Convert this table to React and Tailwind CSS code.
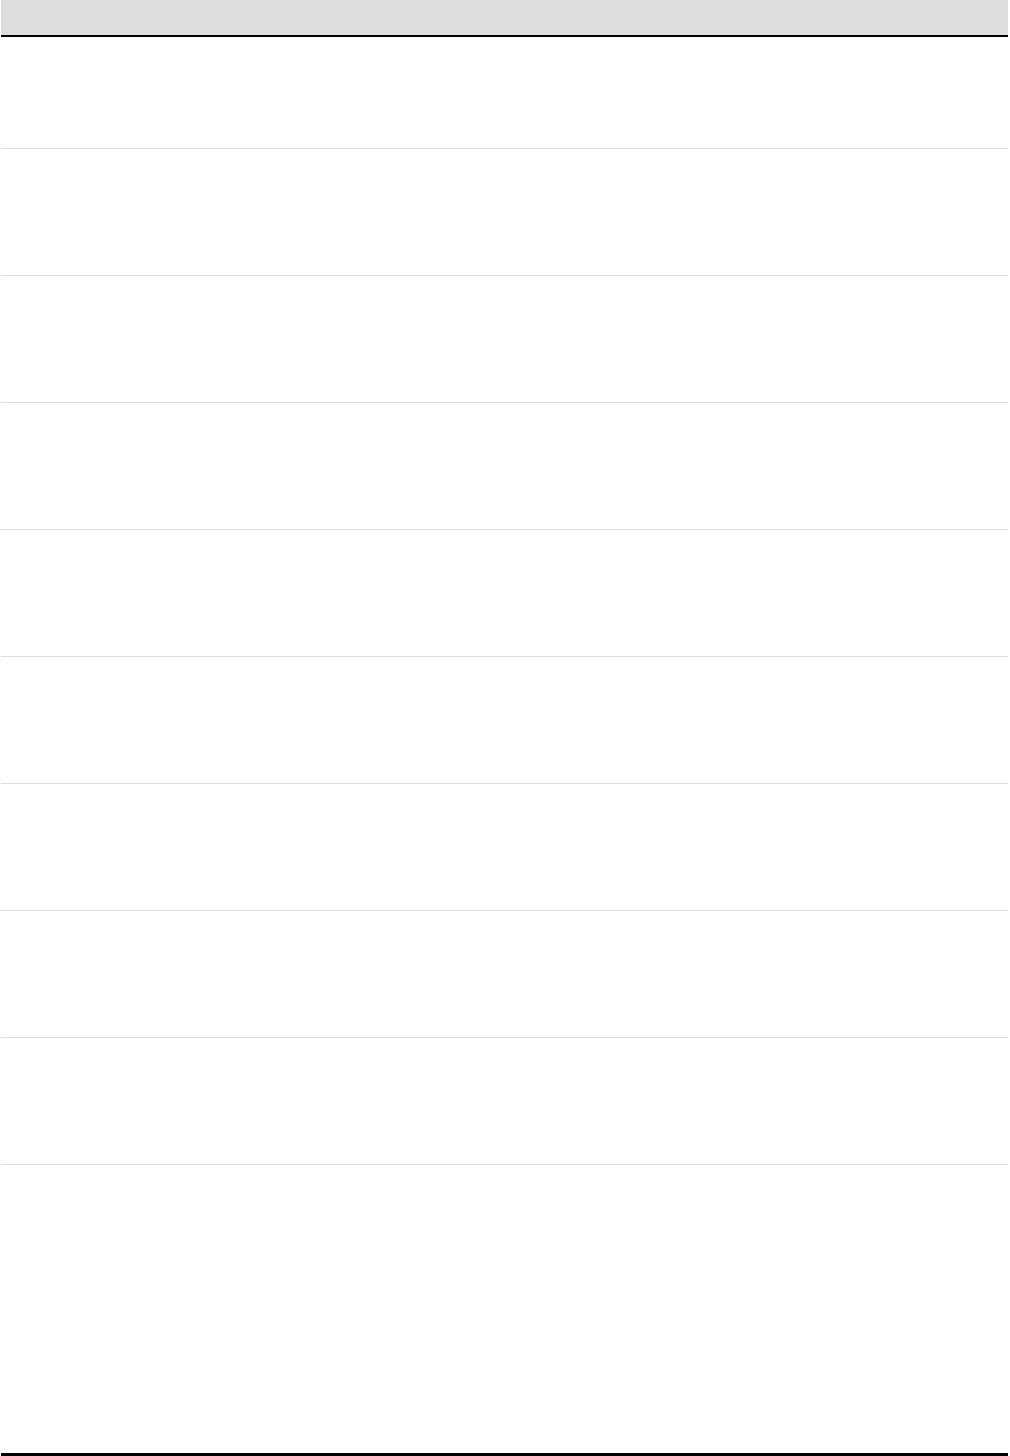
export default function App() {
  const rows = [
    'h-[112px]',
    'h-[127px]',
    'h-[127px]',
    'h-[127px]',
    'h-[127px]',
    'h-[127px]',
    'h-[127px]',
    'h-[127px]',
    'h-[127px]',
  ];
  return (
    <div className="w-[1010px] h-[1456px] bg-white font-['Liberation_Sans',sans-serif]">
      <div className="ml-px w-[1007px] flex flex-col">
        {/* header */}
        <div className="h-[35px] bg-[#dddddd]" />
        <div className="h-[2px] bg-black" />
        {rows.map((h, i) => (
          <div key={i} className={`${h} border-b border-[#dddddd]`} />
        ))}
        <div className="h-[288px]" />
        <div className="h-[3px] bg-black" />
      </div>
    </div>
  );
}
